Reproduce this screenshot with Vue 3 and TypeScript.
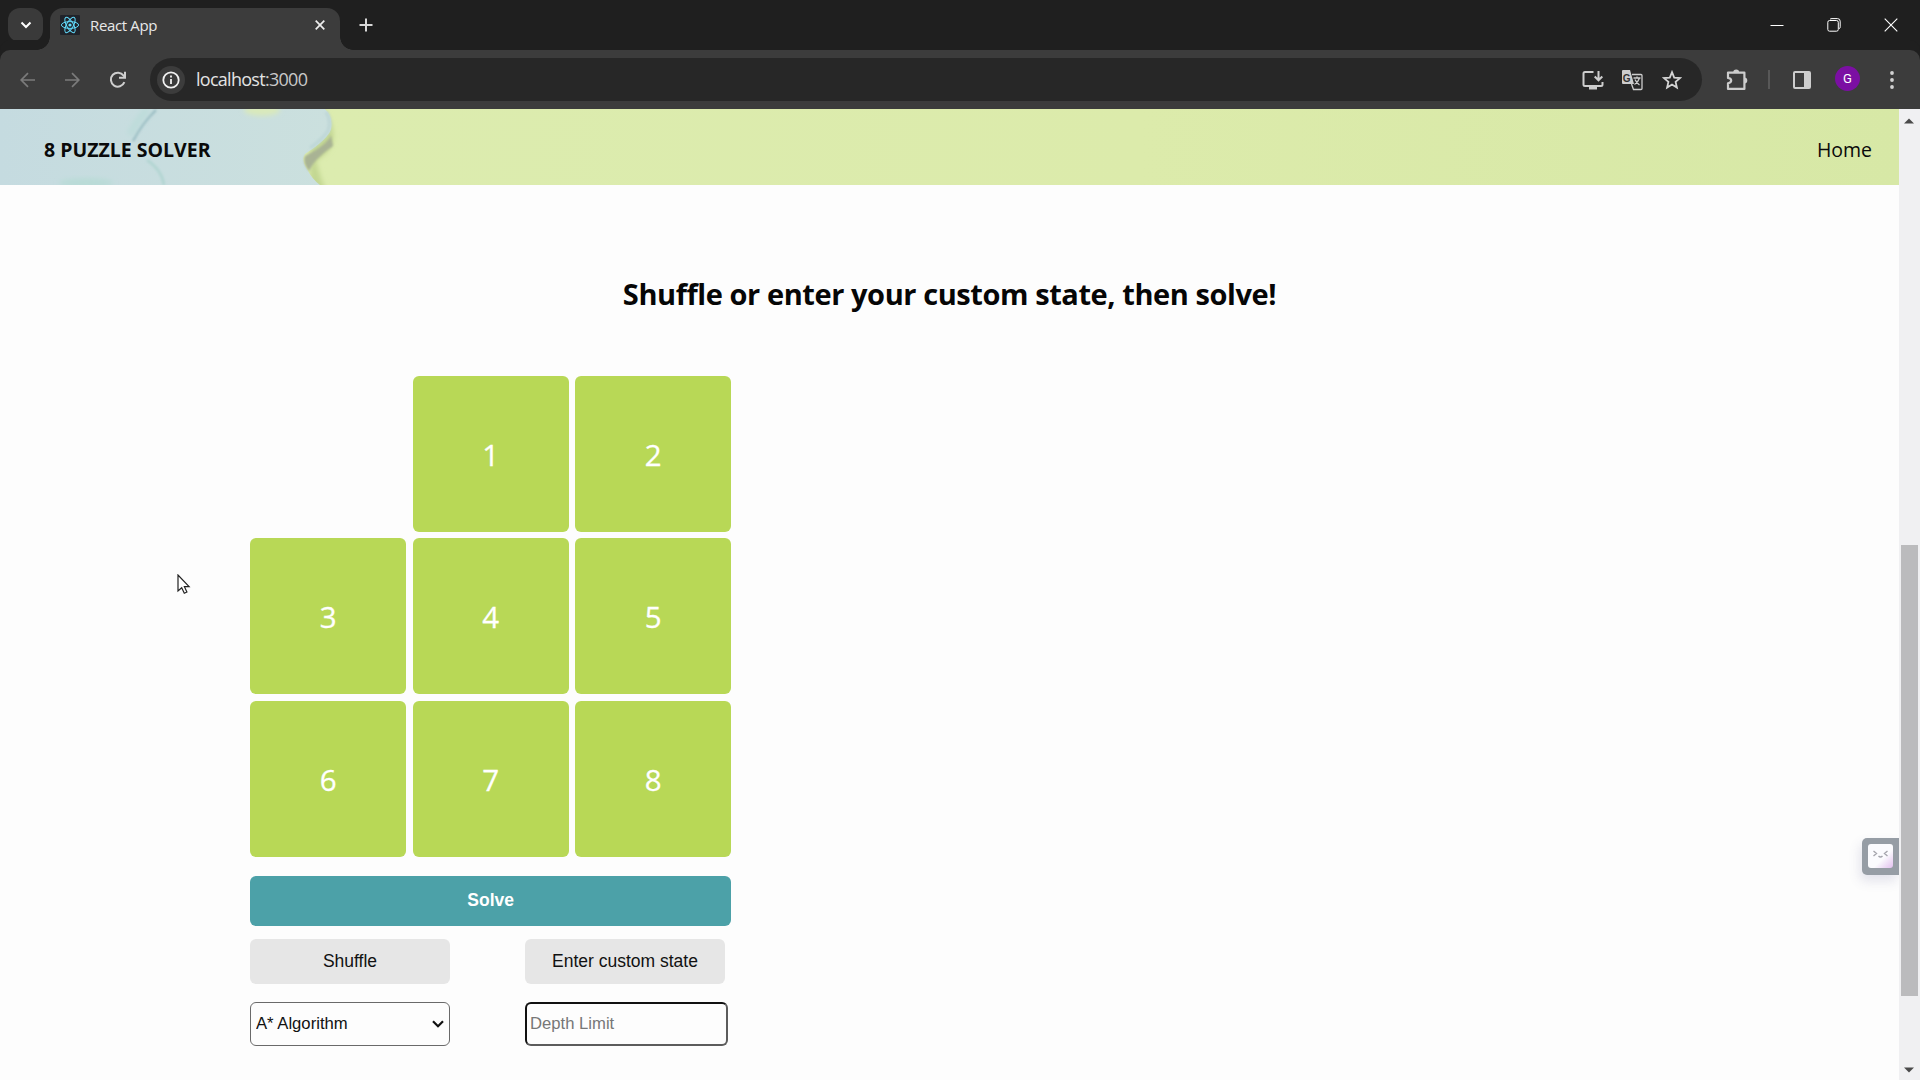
<script setup lang="ts">
import { ref } from 'vue'

const tiles = ref<number[]>([0, 1, 2, 3, 4, 5, 6, 7, 8])
const algorithms: string[] = ['A* Algorithm']
const algorithm = ref<string>(algorithms[0])
const depthLimit = ref<string>('')
</script>

<template>
  <div class="window">
    <div class="tabstrip">
      <div class="tab-search">
        <svg width="12" height="8" viewBox="0 0 12 8"><path d="M1.5 1.5 6 6l4.500-4.500" fill="none" stroke="#fff" stroke-width="2" /></svg>
      </div>
      <div class="tab">
        <svg class="favicon" width="20" height="20" viewBox="0 0 20 20">
          <rect width="20" height="20" rx="1" fill="#20232a" />
          <g fill="none" stroke="#61dafb" stroke-width="1">
            <ellipse cx="10" cy="10" rx="8.600" ry="3.400" />
            <ellipse cx="10" cy="10" rx="8.600" ry="3.400" transform="rotate(60 10 10)" />
            <ellipse cx="10" cy="10" rx="8.600" ry="3.400" transform="rotate(120 10 10)" />
          </g>
          <circle cx="10" cy="10" r="1.600" fill="#61dafb" />
        </svg>
        <span class="tab-title">React App</span>
        <svg class="tab-close" width="10" height="10" viewBox="0 0 10 10"><path d="M.7.7l8.600 8.600M9.300.7.7 9.300" stroke="#eee" stroke-width="1.700" /></svg>
      </div>
      <svg class="new-tab" width="14" height="14" viewBox="0 0 14 14"><path d="M7 .5v13M.5 7h13" stroke="#d8d8d8" stroke-width="2" /></svg>
      <div class="controls">
        <svg width="14" height="14" viewBox="0 0 14 14"><path d="M.5 7.500h13" stroke="#fff" /></svg>
        <svg width="14" height="14" viewBox="0 0 14 14" fill="none" stroke="#fff"><rect x=".8" y="2.500" width="10.500" height="10.700" rx="1.800" /><path d="M3 1.300Q3.500.6 5 .6h5.500q2.700 0 2.700 2.700v5.500q0 1.500-1 2" /></svg>
        <svg width="14" height="14" viewBox="0 0 14 14"><path d="M.7.7l12.600 12.600M13.300.7.7 13.300" stroke="#fff" stroke-width="1.100" /></svg>
      </div>
    </div>

    <div class="toolbar">
      <div class="nav">
        <svg width="16" height="16" viewBox="0 0 16 16" fill="none" stroke="#7b7b7b" stroke-width="1.700"><path d="M15 8H1.500M8 1.200 1.200 8 8 14.800" /></svg>
        <svg width="16" height="16" viewBox="0 0 16 16" fill="none" stroke="#7b7b7b" stroke-width="1.700"><path d="M1 8h13.500M8 1.200 14.800 8 8 14.800" /></svg>
        <svg width="18" height="18" viewBox="0 0 18 18" fill="none" stroke="#cfcfcf" stroke-width="2"><path d="M15.400 11.200A7 7 0 1 1 14.600 4.600L16 6.400" /><path d="M16 .8v6h-6" /></svg>
      </div>
      <div class="omnibox">
        <span class="site-info">
          <svg width="18" height="18" viewBox="0 0 18 18"><circle cx="9" cy="9" r="7.700" fill="none" stroke="#f2f2f2" stroke-width="1.800" /><path d="M9 8v5M9 4.600v2" stroke="#f2f2f2" stroke-width="1.800" /></svg>
        </span>
        <span class="url"><b>localhost</b><i>:3000</i></span>
        <svg width="22" height="20" viewBox="0 0 22 20" fill="none" stroke="#cdcdcd" stroke-width="2"><path d="M11.500 2H3Q1.500 2 1.500 3.500v11Q1.500 16 3 16h16q1.500 0 1.500-1.500V12" /><path d="M7 18h8" stroke-width="3" /><path d="M16.500 1v9M12.700 6.500l3.800 3.800 3.800-3.800" /></svg>
        <svg class="translate" width="22" height="22" viewBox="0 0 22 22"><path d="M2 1h7l4 14H2Q1 15 1 14V2Q1 1 2 1z" fill="#cdcdcd" /><text x="1.800" y="12.500" class="glyph" fill="#333">G</text><path d="M11 5.500h9q1 0 1 1v13q0 1-1 1h-7.500L10.500 15" fill="none" stroke="#cdcdcd" stroke-width="1.300" /><path d="M12.500 9h7M16 7.500V9M18.500 9q-1.500 4.500-5 6.500M14 10.500q1.500 3.500 4.500 5.500" fill="none" stroke="#cdcdcd" stroke-width="1.300" /></svg>
        <svg width="20" height="20" viewBox="0 0 20 20"><path d="M10 2.200l2.200 5.400 5.800.5-4.400 3.800 1.300 5.700-4.900-3-4.900 3 1.300-5.700L2 8.100l5.800-.5z" fill="none" stroke="#d4d4d4" stroke-width="1.800" /></svg>
      </div>
      <div class="actions">
        <svg width="22" height="22" viewBox="0 0 22 22"><path d="M2 3.600h16.400v16.300H2v-5.600q3.200-.6 3.200-2.700T2 8.900z" fill="none" stroke="#cdcdcd" stroke-width="2.200" stroke-linejoin="round" /><path d="M7.200 3.500a3 3 0 0 1 6 0zM18.300 8.500a3 3 0 0 1 0 6z" fill="#cdcdcd" /></svg>
        <span class="divider"></span>
        <svg width="18" height="18" viewBox="0 0 18 18"><rect x="1" y="1" width="16" height="16" rx="1" fill="none" stroke="#cdcdcd" stroke-width="2" /><path d="M11 1h6v16h-6z" fill="#cdcdcd" /></svg>
        <span class="avatar">G</span>
        <svg width="4" height="18" viewBox="0 0 4 18" fill="#d2d2d2"><circle cx="2" cy="2" r="1.900" /><circle cx="2" cy="9" r="1.900" /><circle cx="2" cy="16" r="1.900" /></svg>
      </div>
    </div>

    <div class="viewport">
      <div class="page">
        <header class="header">
          <svg class="art" width="420" height="76" viewBox="0 0 420 76">
            <defs>
              <filter id="soft" x="-30%" y="-30%" width="160%" height="160%"><feGaussianBlur stdDeviation="2.500" /></filter>
              <filter id="fine" x="-30%" y="-30%" width="160%" height="160%"><feGaussianBlur stdDeviation="1.300" /></filter>
              <linearGradient id="sky" x1="0" x2="1"><stop offset="0" stop-color="#c5dbe0" /><stop offset="1" stop-color="#cbe0de" /></linearGradient>
            </defs>
            <path d="M318-5Q336 12 333 33 330 43 316 52 320 68 326 82H310V-5z" fill="#c3d792" filter="url(#soft)" />
            <path d="M0 0H325Q333 8 331 20 328 30 305 45 301 51 307 60 312 70 320 76H0z" fill="url(#sky)" />
            <path d="M331 26Q327 36 305 47 302 53 309 62 314 50 333 37z" fill="#a9b394" filter="url(#fine)" />
            <path d="M326 3Q332 12 328 22 322 31 310 39" fill="none" stroke="#c0d8d8" stroke-width="4" filter="url(#fine)" />
            <path d="M156 1Q142 14 133 32" fill="none" stroke="#9cbec4" stroke-width="2.500" filter="url(#fine)" />
            <path d="M148 0Q135 14 130 26" fill="none" stroke="#bddcda" stroke-width="7" filter="url(#soft)" />
            <path d="M147 51Q162 61 164 76" fill="none" stroke="#b4d6d3" stroke-width="3" filter="url(#fine)" />
            <ellipse cx="86" cy="74" rx="27" ry="5" fill="#b9dbd7" filter="url(#soft)" />
            <ellipse cx="262" cy="1" rx="18" ry="6" fill="#d9e9bb" filter="url(#soft)" />
          </svg>
          <span class="brand">8 PUZZLE SOLVER</span>
          <a class="home">Home</a>
        </header>

        <h1 class="title"><span>Shuffle or enter your custom state, then solve!</span></h1>

        <main class="solver">
          <div class="board">
            <div v-for="tile in tiles" :key="tile" class="tile" :class="{ empty: tile === 0 }">{{ tile || '' }}</div>
          </div>
          <button class="solve">Solve</button>
          <div class="row">
            <button class="plain">Shuffle</button>
            <button class="plain">Enter custom state</button>
          </div>
          <div class="row fields">
            <div class="select-wrap">
              <select v-model="algorithm" class="select">
                <option v-for="name in algorithms" :key="name">{{ name }}</option>
              </select>
              <svg class="chevron" width="12" height="8" viewBox="0 0 12 8"><path d="M1 1.300 6 6.300l5-5" fill="none" stroke="#111" stroke-width="2.200" /></svg>
            </div>
            <input v-model="depthLimit" class="depth" placeholder="Depth Limit" />
          </div>
        </main>
      </div>

      <div class="scrollbar">
        <svg width="10" height="6" viewBox="0 0 10 6"><path d="M0 5.500 5 .5l5 5z" fill="#4a4a4a" /></svg>
        <div class="thumb"></div>
        <svg width="10" height="6" viewBox="0 0 10 6"><path d="M0 .5l5 5 5-5z" fill="#4a4a4a" /></svg>
      </div>
    </div>

    <div class="widget">
      <svg width="25" height="24" viewBox="0 0 25 24">
        <defs><linearGradient id="face" x1="0" y1="0" x2="1" y2="1"><stop offset=".6" stop-color="#fbfbfe" /><stop offset="1" stop-color="#e2bfee" /></linearGradient></defs>
        <rect width="25" height="24" rx="3" fill="url(#face)" />
        <path d="M5.500 7l3 2.500-3 2.500M19.500 7l-3 2.500 3 2.500M10.500 12q2 2 4 0" fill="none" stroke="#a5a5ad" stroke-width="1.400" />
      </svg>
    </div>

    <svg class="cursor" width="14" height="21" viewBox="0 0 14 21"><path d="M1 1v16l3.700-3.300 2.600 5.500 2.600-1.200-2.500-5.300h4.700z" fill="#fff" stroke="#222" stroke-width="1.200" /></svg>
  </div>
</template>

<style>
body {
  overflow: hidden;
}
</style>

<style scoped>
.window {
  position: relative;
  display: flex;
  flex-direction: column;
  width: 1920px;
  height: 1080px;
  overflow: hidden;
  background: #fdfdfd;
  font-family: 'Open Sans', 'Noto Sans', sans-serif;
}
.window *, .window {
  box-sizing: border-box;
}
svg {
  display: block;
  flex: none;
}
.tabstrip {
  display: flex;
  align-items: center;
  height: 50px;
  flex: none;
  padding-left: 8px;
  background: #1f1f1f;
}
.tab-search {
  display: flex;
  align-items: center;
  justify-content: center;
  width: 35px;
  height: 34px;
  border-radius: 12px;
  background: #3a3a3a;
}
.tab {
  position: relative;
  display: flex;
  align-items: center;
  align-self: flex-end;
  width: 290px;
  height: 42px;
  margin-left: 7px;
  padding: 0 15px 8px 10px;
  border-radius: 13px 13px 0 0;
  background: #3c3c3c;
}
.tab::before, .tab::after {
  content: '';
  position: absolute;
  bottom: 0;
  width: 13px;
  height: 13px;
}
.tab::before {
  right: 100%;
  background: radial-gradient(circle at 0 0, transparent 12.500px, #3c3c3c 13px);
}
.tab::after {
  left: 100%;
  background: radial-gradient(circle at 100% 0, transparent 12.500px, #3c3c3c 13px);
}
.tab-title {
  flex: 1;
  margin-left: 10px;
  font-size: 15px;
  line-height: 20px;
  letter-spacing: -0.35px;
  color: #e8e8e8;
}
.new-tab {
  margin-left: 18.500px;
}
.controls {
  display: flex;
  gap: 43px;
  margin-left: auto;
  margin-right: 22px;
}
.toolbar {
  display: flex;
  align-items: center;
  height: 59px;
  flex: none;
  background: #3c3c3c;
  border-radius: 10px 10px 0 0;
  box-shadow: 0 -10px 0 0 #1f1f1f;
}
.nav {
  display: flex;
  align-items: center;
  gap: 29px;
  width: 150px;
  padding-left: 20px;
}
.nav svg:nth-child(2) {
  margin: 0 0 0 -1px;
}
.omnibox {
  display: flex;
  align-items: center;
  gap: 18px;
  width: 1552px;
  height: 43px;
  padding: 0 20px 0 7px;
  border-radius: 22px;
  background: #272727;
}
.site-info {
  display: flex;
  align-items: center;
  justify-content: center;
  width: 28px;
  height: 28px;
  border-radius: 50%;
  background: #3c3c3c;
}
.url {
  flex: 1;
  margin: -2px 0 0 -7px;
  font-size: 18px;
  letter-spacing: -0.72px;
  color: #e3e3e3;
}
.url b, .url i {
  font: inherit;
}
.url i {
  color: #c9c9c9;
}
.translate {
  margin: 0 1px 0 -1px;
}
.glyph {
  font: bold 10px 'Liberation Sans', sans-serif;
}
.actions {
  display: flex;
  align-items: center;
  padding-left: 23.500px;
}
.divider {
  width: 2px;
  height: 19px;
  margin: 0 23px 0 20.500px;
  background: #585858;
}
.avatar {
  width: 25px;
  height: 25px;
  margin: 0 30px 2px 24px;
  border-radius: 50%;
  background: #7b0fa3;
  color: #fff;
  font: 13px/25px Roboto, sans-serif;
  text-align: center;
}
.viewport {
  display: flex;
  flex: 1;
  min-height: 0;
}
.page {
  width: 1899px;
}
.header {
  position: relative;
  display: flex;
  align-items: center;
  justify-content: space-between;
  height: 76px;
  padding: 6px 27px 0 44px;
  background: linear-gradient(90deg, #dcecaf 320px, #dcebab 60%, #d7e8a6);
}
.art {
  position: absolute;
  left: 0;
  top: 0;
}
.brand {
  position: relative;
  font-size: 19.500px;
  font-weight: 700;
  color: #0a0a0a;
  line-height: 28px;
}
.home {
  font-size: 19.500px;
  line-height: 28px;
  color: #0a0a0a;
}
.title {
  margin: 89px 0 0;
  font-size: 29px;
  line-height: 40px;
  font-weight: 700;
  letter-spacing: -0.42px;
  text-align: center;
  color: #060606;
}
.solver {
  width: 481.250px;
  margin: 61.700px 0 0 250px;
}
.board {
  display: grid;
  grid-template-columns: repeat(3, 156.250px);
  grid-auto-rows: 156.250px;
  gap: 6.250px;
}
.tile {
  display: flex;
  align-items: center;
  justify-content: center;
  padding-top: 1px;
  border-radius: 6px;
  background: #b8d856;
  color: #fff;
  font-size: 29.500px;
  -webkit-text-stroke: 0.3px #fff;
}
.tile.empty {
  background: none;
}
button {
  display: block;
  padding: 0;
  border: 0;
  border-radius: 6px;
  font-family: 'Liberation Sans', Arial, sans-serif;
  font-size: 17.500px;
}
.solve {
  width: 100%;
  height: 50px;
  margin-top: 19.500px;
  padding-bottom: 1px;
  background: #4ca1a8;
  color: #fff;
  font-weight: 700;
}
.row {
  display: flex;
  gap: 75px;
  margin-top: 12.700px;
}
.plain {
  width: 200px;
  height: 45px;
  background: #e6e6e6;
  color: #111;
}
.fields {
  margin-top: 18px;
}
.select-wrap {
  position: relative;
  width: 200px;
  height: 44px;
}
.select {
  width: 100%;
  height: 100%;
  padding: 0 5px 1px;
  appearance: none;
  border: 1px solid #6a6a6a;
  border-radius: 6px;
  background: #fdfdfd;
  color: #111;
  font: 16.670px 'Liberation Sans', Arial, sans-serif;
}
.chevron {
  position: absolute;
  right: 6px;
  top: 18px;
}
.depth {
  width: 203px;
  height: 44px;
  padding: 0 3px;
  border: 2px solid;
  border-color: #111 #5c5c5c #5c5c5c #111;
  border-radius: 6px;
  outline: 0;
  background: #fdfdfd;
  font: 16.670px 'Liberation Sans', Arial, sans-serif;
}
.depth::placeholder {
  color: #777;
}
.scrollbar {
  display: flex;
  flex-direction: column;
  align-items: center;
  width: 21px;
  padding: 9px 1px 7px 0;
  background: #f0f0f2;
}
.thumb {
  width: 17px;
  height: 451px;
  margin: 421px 0 auto 1px;
  background: #bbbbbd;
}
.widget {
  position: absolute;
  left: 1862px;
  top: 838px;
  width: 37px;
  height: 37px;
  padding: 6px;
  border-radius: 5px 0 0 5px;
  background: #969da5;
  box-shadow: -2px 6px 12px rgba(90, 90, 140, 0.16);
  clip-path: inset(-20px 0 -30px -20px);
}
.cursor {
  position: absolute;
  left: 176.500px;
  top: 573.500px;
}
</style>
